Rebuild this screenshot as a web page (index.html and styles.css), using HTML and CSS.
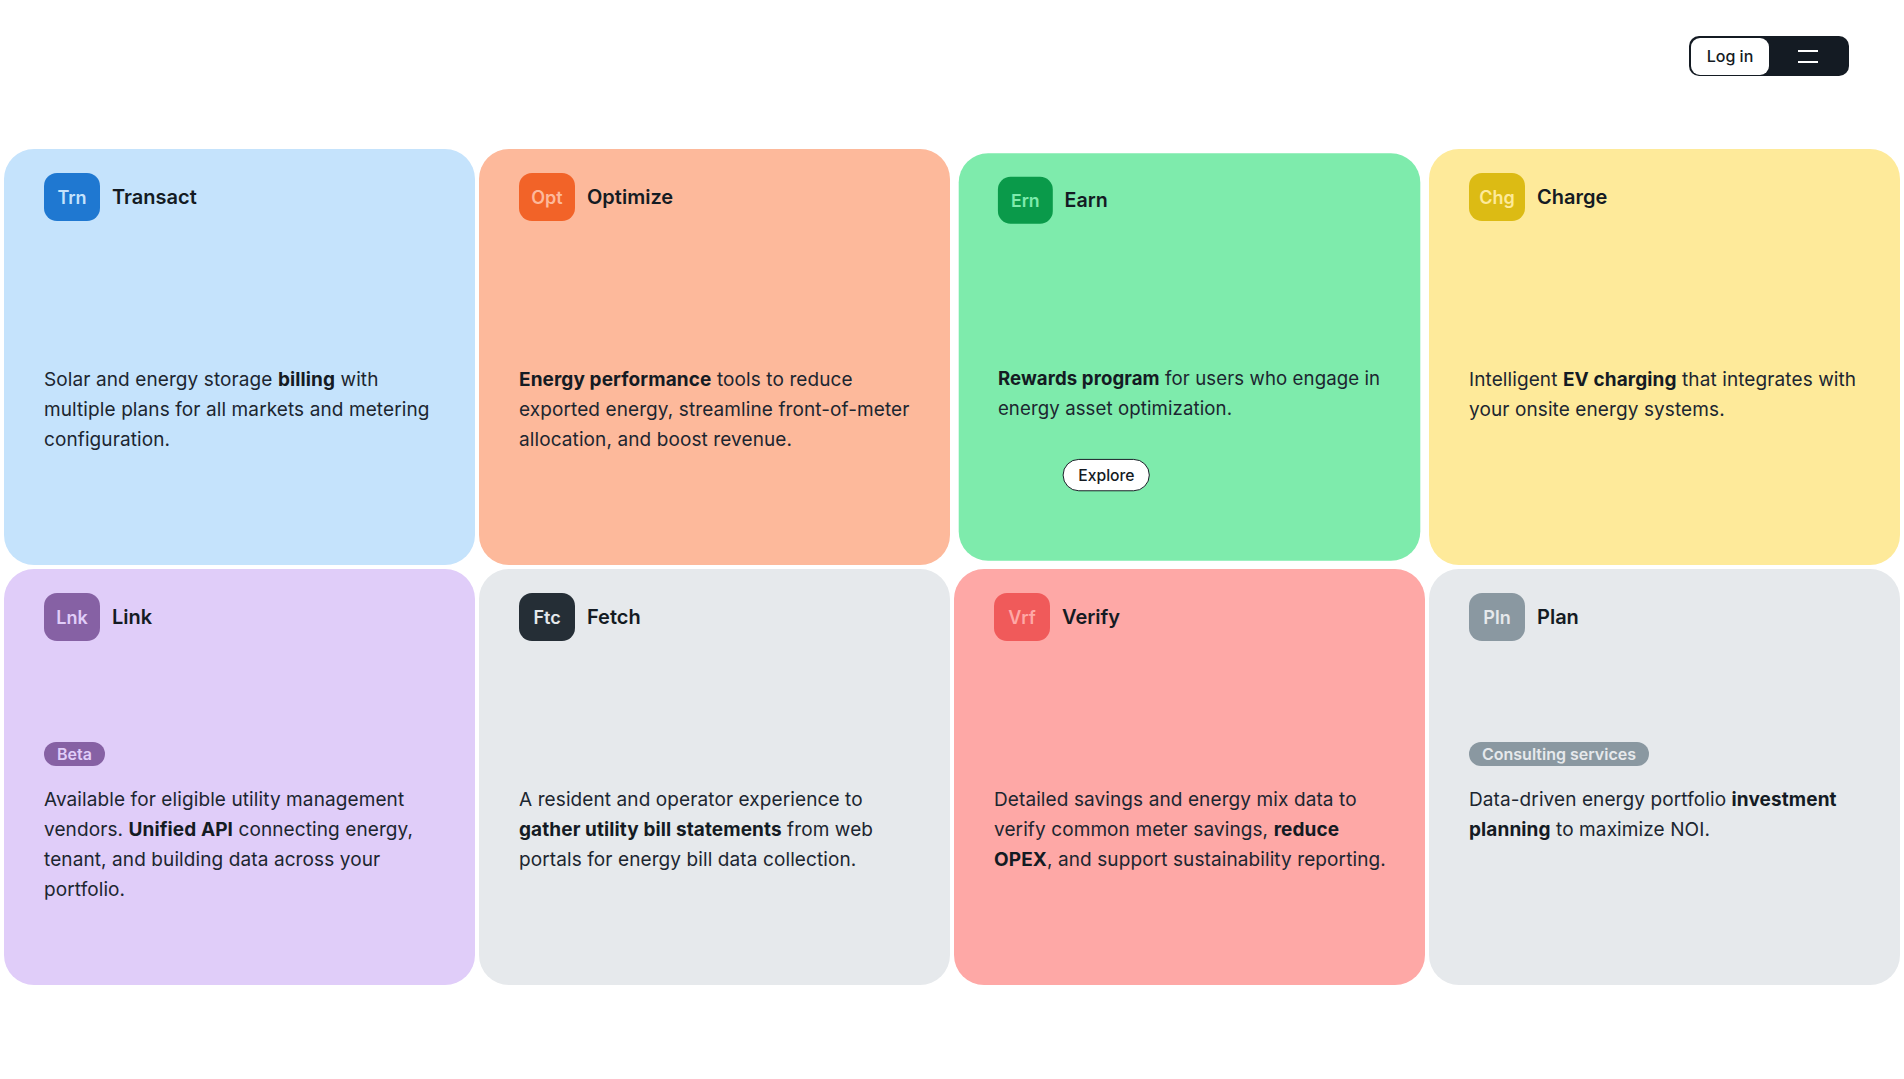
FILE: index.html
```html
<!DOCTYPE html>
<html lang="en">
<head>
  <meta charset="UTF-8">
  <meta name="viewport" content="width=device-width, initial-scale=1.0">
  <title>Products</title>
  <link rel="stylesheet" href="styles.css">
</head>
<body>
  <header class="topbar">
    <div class="nav-pill">
      <a href="#" class="login">Log in</a>
      <button class="menu" aria-label="Menu">
        <span></span>
        <span></span>
      </button>
    </div>
  </header>

  <main class="grid">
    <div class="card card-transact">
      <div class="card-head">
        <div class="badge-icon">Trn</div>
        <h3>Transact</h3>
      </div>
      <div class="tag-row"></div>
      <p class="desc">Solar and energy storage <b>billing</b> with multiple plans for all markets and metering configuration.</p>
    </div>

    <div class="card card-optimize">
      <div class="card-head">
        <div class="badge-icon">Opt</div>
        <h3>Optimize</h3>
      </div>
      <div class="tag-row"></div>
      <p class="desc"><b>Energy performance</b> tools to reduce exported energy, streamline front-of-meter allocation, and boost revenue.</p>
    </div>

    <div class="card card-earn is-hover">
      <div class="card-head">
        <div class="badge-icon">Ern</div>
        <h3>Earn</h3>
      </div>
      <div class="tag-row"></div>
      <p class="desc"><b>Rewards program</b> for users who engage in energy asset optimization.</p>
      <a href="#" class="explore">Explore</a>
    </div>

    <div class="card card-charge">
      <div class="card-head">
        <div class="badge-icon">Chg</div>
        <h3>Charge</h3>
      </div>
      <div class="tag-row"></div>
      <p class="desc">Intelligent <b>EV charging</b> that integrates with your onsite energy systems.</p>
    </div>

    <div class="card card-link">
      <div class="card-head">
        <div class="badge-icon">Lnk</div>
        <h3>Link</h3>
      </div>
      <div class="tag-row"><span class="tag">Beta</span></div>
      <p class="desc">Available for eligible utility management vendors. <b>Unified API</b> connecting energy, tenant, and building data across your portfolio.</p>
    </div>

    <div class="card card-fetch">
      <div class="card-head">
        <div class="badge-icon">Ftc</div>
        <h3>Fetch</h3>
      </div>
      <div class="tag-row"></div>
      <p class="desc">A resident and operator experience to <b>gather utility bill statements</b> from web portals for energy bill data collection.</p>
    </div>

    <div class="card card-verify">
      <div class="card-head">
        <div class="badge-icon">Vrf</div>
        <h3>Verify</h3>
      </div>
      <div class="tag-row"></div>
      <p class="desc">Detailed savings and energy mix data to verify common meter savings, <b>reduce OPEX</b>, and support sustainability reporting.</p>
    </div>

    <div class="card card-plan">
      <div class="card-head">
        <div class="badge-icon">Pln</div>
        <h3>Plan</h3>
      </div>
      <div class="tag-row"><span class="tag">Consulting services</span></div>
      <p class="desc">Data-driven energy portfolio <b>investment planning</b> to maximize NOI.</p>
    </div>
  </main>
</body>
</html>
```

FILE: styles.css
```css
body {
    font-family: 'Inter', 'Noto Sans', sans-serif;
    margin: 0;
    padding: 0;
    background: #fff;
    color: #1c2630;
}
.topbar {
    display: flex;
    justify-content: flex-end;
    padding: 36px 55px 0 0;
    height: 113px;
    box-sizing: border-box;
}
.nav-pill {
    display: flex;
    align-items: center;
    width: 160px;
    height: 40px;
    box-sizing: border-box;
    background: #141b23;
    border-radius: 10px;
    padding: 1px 2px;
}
.login {
    display: flex;
    align-items: center;
    justify-content: center;
    width: 78px;
    height: 37px;
    background: #fff;
    border-radius: 9px;
    color: #141b23;
    font-size: 16px;
    font-weight: 500;
    text-decoration: none;
}
.menu {
    flex: 1;
    height: 100%;
    background: none;
    border: none;
    display: flex;
    flex-direction: column;
    align-items: center;
    justify-content: center;
    gap: 9px;
    padding: 0;
    cursor: pointer;
}
.menu span {
    display: block;
    width: 20px;
    height: 2px;
    background: #fff;
}
.grid {
    display: grid;
    grid-template-columns: repeat(4, 1fr);
    grid-auto-rows: 416px;
    gap: 4px;
    padding: 36px 4px 0 4px;
}
.card {
    border-radius: 30px;
    padding: 24px 32px 24px 40px;
    display: flex;
    flex-direction: column;
    align-items: flex-start;
    transition: transform 0.3s;
}
.card.is-hover {
    transform: scale(0.98);
}
.card-head {
    display: flex;
    align-items: center;
    gap: 12px;
}
.badge-icon {
    width: 56px;
    height: 48px;
    border-radius: 13px;
    display: flex;
    align-items: center;
    justify-content: center;
    font-size: 18px;
    font-weight: 600;
}
.card-head h3 {
    margin: 0;
    font-size: 20px;
    font-weight: 600;
    color: #141b23;
}
.tag-row {
    height: 125px;
    display: flex;
    align-items: flex-end;
}
.tag {
    display: inline-block;
    height: 24px;
    line-height: 24px;
    padding: 0 13px;
    border-radius: 12px;
    font-size: 16px;
    font-weight: 600;
}
.desc {
    margin: 19px 0 0 0;
    font-size: 19px;
    line-height: 30px;
    font-weight: 400;
    letter-spacing: 0.1px;
}
.desc b {
    font-weight: 700;
    color: #141b23;
}
.explore {
    margin: 36px 0 0 66px;
    height: 33px;
    padding: 0 15px;
    box-sizing: border-box;
    border: 1px solid #141b23;
    border-radius: 17px;
    background: #fff;
    display: flex;
    align-items: center;
    color: #141b23;
    font-size: 16px;
    font-weight: 500;
    text-decoration: none;
}

.card-transact { background: #c5e3fc; }
.card-transact .badge-icon { background: #1f78d1; color: #c5e3fc; }
.card-optimize { background: #fdb99b; }
.card-optimize .badge-icon { background: #f26328; color: #fdb99b; }
.card-earn { background: #7eebac; }
.card-earn .badge-icon { background: #0a9a4a; color: #7eebac; }
.card-charge { background: #feea9a; }
.card-charge .badge-icon { background: #dcbb14; color: #feea9a; }
.card-link { background: #e0cdf9; }
.card-link .badge-icon,
.card-link .tag { background: #8661a4; color: #e0cdf9; }
.card-fetch { background: #e6e9ec; }
.card-fetch .badge-icon { background: #252e36; color: #e6e9ec; }
.card-verify { background: #fea8a6; }
.card-verify .badge-icon { background: #f05a5a; color: #fea8a6; }
.card-plan { background: #e6e9ec; }
.card-plan .badge-icon,
.card-plan .tag { background: #8a98a1; color: #e6e9ec; }
```
